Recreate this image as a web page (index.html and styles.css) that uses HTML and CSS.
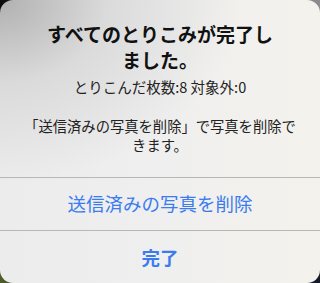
FILE: index.html
```html
<!DOCTYPE html>
<html lang="ja">
<head>
<meta charset="utf-8">
<title>Alert</title>
<link rel="stylesheet" href="styles.css">
</head>
<body>
<div class="alert">
  <div class="alert-body">
    <h1 class="alert-title">すべてのとりこみが完了し<br>ました。</h1>
    <p class="alert-sub">とりこんだ枚数:8 対象外:0</p>
    <p class="alert-msg">「送信済みの写真を削除」で写真を削除で<br>きます。</p>
  </div>
  <button class="alert-btn">送信済みの写真を削除</button>
  <button class="alert-btn alert-btn-bold">完了</button>
</div>
</body>
</html>
```
FILE: styles.css
```css
html, body {
  margin: 0;
  padding: 0;
  width: 320px;
  height: 283px;
  overflow: hidden;
}
body {
  background:
    linear-gradient(90deg, #0c0c0c 0%, #5a5a5a 60%, #8c8c8c 100%) top / 100% 50% no-repeat,
    linear-gradient(90deg, #4d5c2a 0%, #2a3020 50%, #141a2a 100%) bottom / 100% 50% no-repeat;
  font-family: "Noto Sans CJK JP", "Noto Sans", sans-serif;
}
.alert {
  width: 320px;
  height: 283px;
  border-radius: 13px;
  overflow: hidden;
  display: flex;
  flex-direction: column;
  background:
    radial-gradient(ellipse 75% 65% at 0% 0%, rgba(170,170,170,0.9) 0%, rgba(200,200,200,0.5) 45%, rgba(230,230,230,0) 100%),
    linear-gradient(90deg, #ececec 0%, #efefef 50%, #f4f2ec 100%);
}
.alert-body {
  padding: 21px 12px 23px;
  text-align: center;
  border-bottom: 1px solid #b9b7b2;
}
.alert-title {
  margin: 0;
  font-size: 19px;
  line-height: 26px;
  font-weight: 700;
  color: #111;
}
.alert-sub {
  margin: 4px 0 0;
  font-size: 14.5px;
  line-height: 20px;
  color: #222;
}
.alert-msg {
  margin: 19px 0 0;
  font-size: 14.3px;
  line-height: 19px;
  color: #222;
}
.alert-btn {
  height: 52px;
  flex: none;
  border: 0;
  background: transparent;
  font-family: inherit;
  font-size: 18.5px;
  color: #3a7cf0;
  padding: 0;
  padding-bottom: 3px;
}
.alert-btn + .alert-btn {
  border-top: 1px solid #b9b7b2;
}
.alert-btn-bold {
  font-weight: 700;
  padding-bottom: 0;
}
```
